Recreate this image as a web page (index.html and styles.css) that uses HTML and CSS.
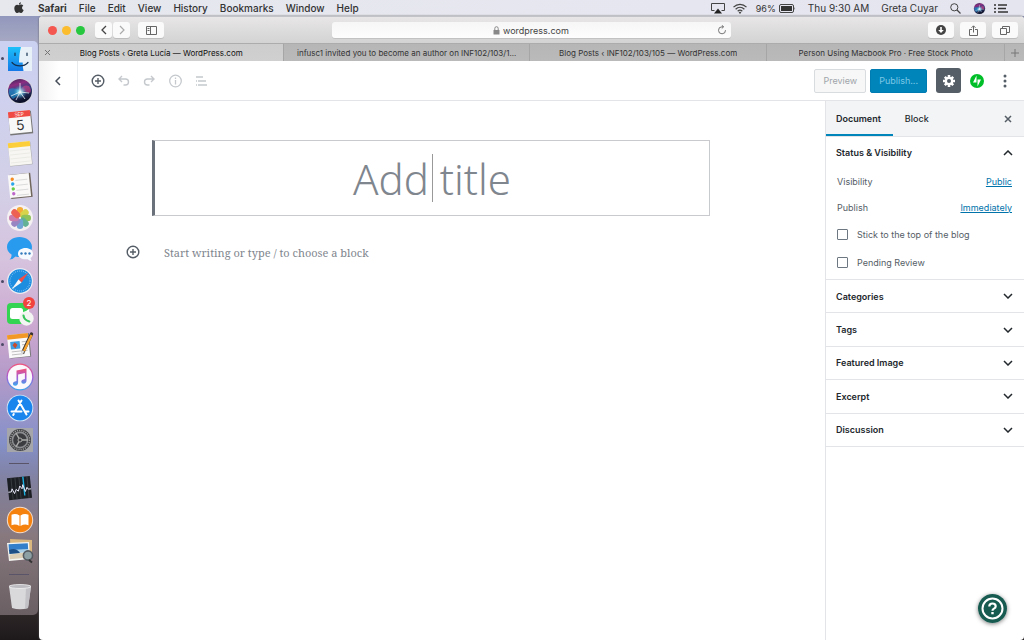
FILE: index.html
```
<!DOCTYPE html>
<html lang="en">

<head>
    <meta charset="utf-8">
    <title>Blog Posts ‹ Greta Lucía — WordPress.com</title>
    <link rel="stylesheet" href="styles.css">
</head>

<body>
    <header class="menubar">
        <nav class="menus" aria-label="Menu bar">
            <button class="apple" aria-label="Apple menu">
                <svg width="10" height="12" viewBox="0 0 10 12"><path fill="#333" d="M6.9.2c.1 1.300-.9 2.400-2 2.400C4.800 1.500 5.800.4 6.900.2zM5 3.200c.5 0 1.200-.6 2.200-.6.8 0 1.600.4 2.100 1.100-1.900 1.100-1.500 3.700.4 4.400-.5 1.500-1.500 3-2.500 3-.8 0-1.100-.5-2.100-.5s-1.300.5-2.100.5C1.700 11.100.3 8.600.3 6.300c0-2.300 1.400-3.600 2.800-3.600.8 0 1.400.5 1.900.5z"/></svg>
            </button>
            <button class="app-name">Safari</button>
            <button>File</button>
            <button>Edit</button>
            <button>View</button>
            <button>History</button>
            <button>Bookmarks</button>
            <button>Window</button>
            <button>Help</button>
        </nav>
        <div class="status">
            <svg width="14" height="12" viewBox="0 0 14 12"><path fill="none" stroke="#444" d="M3.500 8.500h-3v-7h13v7h-3"/><path fill="#222" d="M7 6.500l4 5H3z"/></svg>
            <svg width="14" height="11" viewBox="0 0 14 11" fill="none" stroke="#444" stroke-width="1.200"><path d="M.5 4.200c3.800-3.800 9.200-3.800 13 0M2.600 6.200c2.600-2.500 6.200-2.500 8.800 0M4.700 8.200c1.400-1.300 3.200-1.300 4.600 0"/><path fill="#444" stroke="none" d="M7 8.600l1.300 1L7 11 5.700 9.600z"/></svg>
            <span class="battery">96%
                <svg width="17" height="9" viewBox="0 0 17 9"><rect x=".5" y=".5" width="14" height="8" rx="1.500" fill="none" stroke="#444"/><rect x="2" y="2" width="11" height="5" fill="#333"/><path fill="#444" d="M15.500 3q1.300 1.500 0 3z"/></svg>
            </span>
            <span>Thu 9:30 AM</span>
            <span>Greta Cuyar</span>
            <svg width="11" height="11" viewBox="0 0 11 11" fill="none" stroke="#444"><circle cx="4.300" cy="4.300" r="3.600"/><path d="M7 7l3.500 3.500" stroke-width="1.300"/></svg>
            <span class="extras">
                <svg width="13" height="13" viewBox="0 0 28 28"><use href="#siri"/></svg>
                <svg width="14" height="9" viewBox="0 0 14 9" fill="none" stroke="#333" stroke-width="1.300"><path d="M0 1h2M4 1h9M0 4.500h2M4 4.500h8M0 8h2M4 8h10"/></svg>
            </span>
        </div>
    </header>

    <div class="desktop">
        <nav class="dock" aria-label="Dock">
            <a href="#" class="running" aria-label="Finder">
                <svg viewBox="0 0 28 28"><defs><linearGradient id="finder" x2="0" y2="1"><stop stop-color="#1cc0fa"/><stop offset="1" stop-color="#1478e6"/></linearGradient></defs><path fill="url(#finder)" d="M2 2h24v24H2z"/><path fill="#e9f1f8" d="M15 2h11v24h-8.500q-.8-3-.8-8.500H13Q13.200 8 15 2z"/><path fill="none" stroke="#15314f" stroke-width="1.200" stroke-linecap="round" d="M9 8v2.500M21 8v2.500M6 17.500c4 4.500 12 4.500 16 0"/></svg>
            </a>
            <a href="#" aria-label="Siri">
                <svg viewBox="0 0 28 28">
                    <defs>
                        <linearGradient id="siri-fill" x2=".3" y2="1"><stop stop-color="#2b2752"/><stop offset=".3" stop-color="#8c2c80"/><stop offset=".55" stop-color="#34407f"/><stop offset="1" stop-color="#0c1129"/></linearGradient>
                        <radialGradient id="siri-glow"><stop stop-color="#fff"/><stop offset=".35" stop-color="#8fe5f5" stop-opacity=".7"/><stop offset="1" stop-color="#258fc8" stop-opacity="0"/></radialGradient>
                    </defs>
                    <g id="siri"><circle cx="14" cy="14" r="13" fill="#d8d8e2"/><circle cx="14" cy="14" r="12" fill="url(#siri-fill)"/><path fill="#1b97d4" opacity=".6" d="M3 12q6-2 11 2-3 6-7 8-5-4-4-10z"/><path fill="#df3c85" opacity=".6" d="M14 14q3-7 9-5 3 4 1 7-5-2-10-2z"/><circle cx="14" cy="15" r="7" fill="url(#siri-glow)"/><path stroke="#fff" stroke-width=".9" opacity=".8" d="M14 15L5 19M14 15l9 1M14 15V6M14 15l5 7M14 15l-4 8"/></g>
                </svg>
            </a>
            <a href="#" aria-label="Calendar">
                <svg viewBox="0 0 28 28"><g transform="rotate(-6 14 14)"><path fill="#777" d="M3 4h23v22.500H3z"/><path fill="#f8f8f8" d="M3 3h22v22H3z"/><path fill="#ef4a43" d="M3 3h22v6H3z"/><text x="14" y="8" class="cal-month">SEP</text><text x="14" y="22" class="cal-day">5</text></g></svg>
            </a>
            <a href="#" aria-label="Notes">
                <svg viewBox="0 0 28 28"><g transform="rotate(-6 14 14)"><path fill="#aaa" d="M3 3h22.500v22.500H3z"/><path fill="#f7f6f2" d="M3 2h22v23H3z"/><path fill="#fbce3a" d="M3 2h22v5H3z"/><path stroke="#e4e3de" stroke-width=".6" d="M4 10h20M4 14h20M4 18h20M4 22h20"/></g></svg>
            </a>
            <a href="#" aria-label="Reminders">
                <svg viewBox="0 0 28 28"><g transform="rotate(-6 14 14)"><path fill="#70665c" d="M4 2h21.500v24H4z"/><path fill="#faf9f8" d="M3 2h21v23H3z"/><path stroke="#c8c8c8" stroke-width=".6" d="M10 8h12M10 13h12M10 18h12M10 23h12"/><circle cx="7" cy="6.500" r="1.700" fill="#f58a22"/><circle cx="7" cy="11.300" r="1.700" fill="#2ba6e9"/><circle cx="7" cy="16.200" r="1.700" fill="#68cd48"/><circle cx="7" cy="21" r="1.700" fill="#bd68c9"/></g></svg>
            </a>
            <a href="#" aria-label="Photos">
                <svg viewBox="0 0 28 28"><circle cx="14" cy="14" r="13" fill="#f5f1f3"/><g opacity=".88"><rect x="10.800" y="3" width="6.400" height="10" rx="3.200" fill="#f8a21e"/><rect x="10.800" y="3" width="6.400" height="10" rx="3.200" fill="#d6cf35" transform="rotate(45 14 14)"/><rect x="10.800" y="3" width="6.400" height="10" rx="3.200" fill="#82bd45" transform="rotate(90 14 14)"/><rect x="10.800" y="3" width="6.400" height="10" rx="3.200" fill="#50aa89" transform="rotate(135 14 14)"/><rect x="10.800" y="3" width="6.400" height="10" rx="3.200" fill="#5e9bd0" transform="rotate(180 14 14)"/><rect x="10.800" y="3" width="6.400" height="10" rx="3.200" fill="#8c78bd" transform="rotate(225 14 14)"/><rect x="10.800" y="3" width="6.400" height="10" rx="3.200" fill="#c66fa5" transform="rotate(270 14 14)"/><rect x="10.800" y="3" width="6.400" height="10" rx="3.200" fill="#eb4e3d" transform="rotate(315 14 14)"/></g></svg>
            </a>
            <a href="#" aria-label="Messages">
                <svg viewBox="0 0 28 28"><path fill="#299bee" d="M13.500 2C20 2 26 6 26 12s-6 10-12.500 10q-2 0-4-.5Q7.500 24 3.500 24.500 6 22.500 5.500 19.500 1 17 1 12C1 6 7 2 13.500 2z"/><path fill="#f7fbff" d="M19.500 13c4 0 7.500 2.200 7.500 5.700 0 2-1 3.300-2.500 4.300q0 1.700 1.500 2.800-3 0-4.300-1.600c-5.500.8-9.700-1.700-9.700-5.500 0-3.500 3.500-5.700 7.500-5.700z"/><g fill="#347bbd"><circle cx="15.500" cy="18.500" r="1.200"/><circle cx="19.500" cy="18.500" r="1.200"/><circle cx="23.500" cy="18.500" r="1.200"/></g></svg>
            </a>
            <a href="#" class="running" aria-label="Safari">
                <svg viewBox="0 0 28 28"><circle cx="14" cy="14" r="13" fill="#ececf2"/><circle cx="14" cy="14" r="11.800" fill="#1d8de0"/><circle cx="14" cy="14" r="10" fill="none" stroke="#9dd1f7" stroke-width="1.200" stroke-dasharray=".6 1.400"/><path fill="#f04d46" d="M22.500 5.500L12.500 12.500l3 3z"/><path fill="#f8f8f8" d="M5.500 22.500l10-7-3-3z"/></svg>
            </a>
            <a href="#" aria-label="FaceTime, 2 notifications">
                <svg viewBox="0 0 28 28"><rect x="1" y="4" width="22" height="21" rx="4" fill="#35d352"/><rect x="4" y="9" width="13" height="11" rx="2.500" fill="#fff"/><path fill="#fff" d="M17 14l6-4v10l-6-3z"/><circle cx="20.500" cy="19.500" r="7.200" fill="#f3f5f3"/><path fill="none" stroke="#37c45a" stroke-width="2.200" stroke-linecap="round" d="M17.500 16.500q.5 4.500 5.800 6"/></svg>
                <span class="badge">2</span>
            </a>
            <a href="#" class="running" aria-label="Pages">
                <svg viewBox="0 0 28 28"><g transform="rotate(-6 14 14)"><path fill="#777" d="M3 3h21v23.500H3z"/><path fill="#fafafa" d="M2 3h21v23H2z"/><path fill="#f29827" d="M2 3h21v4.500H2z"/><path fill="#419ee1" d="M4.500 10H14v7.500H4.500z"/><path fill="#c84c2d" d="M9 11l2.500 2.500L9 17l-2.500-3.500z"/><path stroke="#aaa" stroke-width=".7" d="M16 11h5M16 14h5M5 20h16M5 23h13"/></g><path stroke="#3a3330" stroke-width="3.400" stroke-linecap="round" d="M25.500 3L17 21"/><path stroke="#f5a32d" stroke-width="2.400" d="M25.500 4L18 20"/><path fill="#ddd" d="M15.500 19l3 1.500-4 5z"/></svg>
            </a>
            <a href="#" aria-label="iTunes">
                <svg viewBox="0 0 28 28"><defs><linearGradient id="note" x2="0" y2="1"><stop stop-color="#f35378"/><stop offset=".5" stop-color="#a65bd6"/><stop offset="1" stop-color="#38a8ed"/></linearGradient></defs><circle cx="14" cy="14" r="13.500" fill="url(#note)"/><circle cx="14" cy="14" r="12.200" fill="#fbf9fb"/><path fill="url(#note)" d="M10.500 7.500L20.500 5.500v12q0 3-3 3.300-2.200 0-2.200-2 0-2.200 3.600-2.800V10l-6.800 1.400v8.100q0 3-3 3.300-2.200 0-2.200-2 0-2.200 3.600-2.800z"/></svg>
            </a>
            <a href="#" aria-label="App Store">
                <svg viewBox="0 0 28 28"><circle cx="14" cy="14" r="13.300" fill="#d8e9f8"/><circle cx="14" cy="14" r="12.400" fill="#1a86ed"/><g fill="none" stroke="#fff" stroke-width="2" stroke-linecap="round"><path d="M15.500 6.500L9 17.500M12.500 6.500l8 14M5.500 17.500h10M19.500 17.500h3M7.800 20l-.6 1"/></g></svg>
            </a>
            <a href="#" aria-label="System Preferences">
                <svg viewBox="0 0 28 28"><path fill="#a4a6aa" d="M1 2h26v24H1z"/><circle cx="14" cy="14" r="11" fill="#3b3c3f"/><circle cx="14" cy="14" r="9.600" fill="none" stroke="#999" stroke-width="1.500" stroke-dasharray="1.200 1"/><circle cx="14" cy="14" r="7.600" fill="none" stroke="#8c8d90" stroke-width="1.600"/><circle cx="14" cy="14" r="2" fill="none" stroke="#aaa"/><path stroke="#aaa" stroke-width="1.400" d="M16 14h6M13 15.700l-3 5.200M13 12.300L10 7"/></svg>
            </a>
            <hr>
            <a href="#" aria-label="Activity Monitor">
                <svg viewBox="0 0 28 28"><g transform="rotate(-6 14 14)"><path fill="#1b1e22" d="M2 3h23v22H2z"/><path stroke="#484e55" stroke-width=".6" d="M6 3v22M10 3v22M14 3v22M22 3v22"/><path stroke="#1bb0df" stroke-width="1.400" d="M18 3v19"/><path fill="none" stroke="#eef" stroke-width=".9" d="M2 17h3l1-3 2 5 2-4 2 2 2-5 2 3 1-4 2 7 2-4 1 2h3"/></g></svg>
            </a>
            <a href="#" aria-label="iBooks">
                <svg viewBox="0 0 28 28"><circle cx="14" cy="14" r="13.200" fill="#f2dccb"/><circle cx="14" cy="14" r="12.200" fill="#f5820f"/><path fill="#fff" d="M13.500 9.500Q9.500 7 5.500 8.800v10.400q4-1.700 8 .8zM14.500 9.500q4-2.500 8-.7v10.400q-4-1.700-8 .8z"/></svg>
            </a>
            <a href="#" aria-label="Preview">
                <svg viewBox="0 0 28 28"><path fill="#d9b77e" d="M4 2l22 1v18L5 22z"/><path fill="#f5f5f2" d="M1 6l22-1 1 17-21 2z"/><path fill="#347fc9" d="M2.500 7.200l19.300-1 .4 7-19.200 1z"/><path fill="#a9cfe6" d="M3 13l19-1 .3 3-19 2z"/><path fill="#dccfb5" d="M3.500 17.500l19-2.500.3 5.500-19 1.800z"/><path fill="#1e4f86" d="M3 13q7-3 11 3l-10.500 1z"/><circle cx="22" cy="18.500" r="4.600" fill="#8da0a4" stroke="#555b60" stroke-width="1.600"/><path stroke="#333" stroke-width="2" d="M23 23l3 2.500"/></svg>
            </a>
            <hr>
            <a href="#" aria-label="Trash">
                <svg viewBox="0 0 28 28"><path fill="#d9d9db" d="M3 3h22l-3 22q-8 2.500-16 0z"/><path fill="#c2c2c6" d="M20 4h5l-3 21-3 .8z"/><ellipse cx="14" cy="3.500" rx="11" ry="2" fill="#bbbbc0" stroke="#f1f1f3" stroke-width=".8"/></svg>
            </a>
        </nav>

        <main class="window">
            <div class="toolbar">
                <div class="tools">
                    <div class="lights">
                        <button class="close" aria-label="Close window"></button>
                        <button class="minimize" aria-label="Minimize window"></button>
                        <button class="zoom" aria-label="Zoom window"></button>
                    </div>
                    <div class="history">
                        <button class="tool" aria-label="Back"><svg width="6" height="10" viewBox="0 0 6 10"><path d="M5 1L1 5l4 4" fill="none" stroke="#444" stroke-width="1.300"/></svg></button>
                        <button class="tool" aria-label="Forward"><svg width="6" height="10" viewBox="0 0 6 10"><path d="M1 1l4 4-4 4" fill="none" stroke="#aaa" stroke-width="1.200"/></svg></button>
                    </div>
                    <button class="tool wide" aria-label="Show sidebar"><svg width="11" height="9" viewBox="0 0 11 9" fill="none" stroke="#666"><path d="M.5.500h10v8H.5zM4.500.500v8M1.500 2.500h2M1.500 4.500h2"/></svg></button>
                </div>
                <div class="address">
                    <svg width="7" height="9" viewBox="0 0 7 9"><path fill="#888" d="M.5 4h6v4.500h-6z"/><path fill="none" stroke="#888" d="M1.800 4V2.500q0-1.800 1.700-1.800t1.700 1.800V4"/></svg>
                    <input type="text" value="wordpress.com" aria-label="Address">
                    <button class="reload" aria-label="Reload"><svg width="10" height="10" viewBox="0 0 10 10" fill="none" stroke="#666" stroke-width=".9"><path d="M8.500 5.200A3.500 3.500 0 1 1 5 1.800h1.500M4.800.2l1.800 1.600-1.800 1.700"/></svg></button>
                </div>
                <div class="tools end">
                    <button class="tool wide" aria-label="Downloads"><svg width="10" height="10" viewBox="0 0 10 10"><circle cx="5" cy="5" r="5" fill="#444"/><path fill="#fff" d="M4.200 2h1.600v3h2L5 8 2.200 5h2z"/></svg></button>
                    <button class="tool wide" aria-label="Share"><svg width="9" height="11" viewBox="0 0 9 11" fill="none" stroke="#666"><path d="M3 4.500H.5v6h8v-6H6M4.500 7.500V1M2.500 2.800l2-2 2 2"/></svg></button>
                    <button class="tool wide" aria-label="Show all tabs"><svg width="10" height="9" viewBox="0 0 10 9" fill="none" stroke="#666"><path d="M.5 2.500h6v6h-6zM2.500 2.500v-2h7v6h-3"/></svg></button>
                </div>
            </div>

            <nav class="tabs" aria-label="Tabs">
                <div class="tab active">
                    <button class="close-tab" aria-label="Close tab"><svg width="7" height="7" viewBox="0 0 7 7"><path d="M1 1l5 5M6 1L1 6" stroke="#777"/></svg></button>
                    <a href="#">Blog Posts ‹ Greta Lucía — WordPress.com</a>
                </div>
                <div class="tab"><a href="#">infusc1 invited you to become an author on INF102/103/1...</a></div>
                <div class="tab"><a href="#">Blog Posts ‹ INF102/103/105 — WordPress.com</a></div>
                <div class="tab"><a href="#">Person Using Macbook Pro · Free Stock Photo</a></div>
                <button class="new-tab" aria-label="New tab"><svg width="8" height="8" viewBox="0 0 8 8"><path d="M4 0v8M0 4h8" stroke="#777"/></svg></button>
            </nav>

            <div class="editor-header">
                <button class="back" aria-label="Back to posts"><svg width="7" height="10" viewBox="0 0 7 10"><path d="M5 1L1 5l4 4" fill="none" stroke="#444d58" stroke-width="1.500"/></svg></button>
                <div class="block-tools">
                    <button aria-label="Add block"><svg width="14" height="14" viewBox="0 0 14 14" fill="none" stroke="#555d66" stroke-width="1.400"><g id="add"><circle cx="7" cy="7" r="5.800"/><path d="M7 4v6M4 7h6"/></g></svg></button>
                    <button aria-label="Undo"><svg width="14" height="14" viewBox="0 0 14 14" fill="none" stroke="#c5c9cd" stroke-width="1.400"><path d="M2 5h6.500q3 0 3 3t-3 3H6.500M5 2L2 5l3 3"/></svg></button>
                    <button aria-label="Redo"><svg width="14" height="14" viewBox="0 0 14 14" fill="none" stroke="#c5c9cd" stroke-width="1.400"><path d="M11 5H4.500q-3 0-3 3t3 3H6.500M8 2l3 3-3 3"/></svg></button>
                    <button aria-label="Content structure"><svg width="14" height="14" viewBox="0 0 14 14" fill="none" stroke="#c5c9cd" stroke-width="1.300"><circle cx="6.500" cy="7" r="5.800"/><path d="M6.500 3.500v1.500M6.500 6v4.500"/></svg></button>
                    <button aria-label="Block navigation"><svg width="14" height="14" viewBox="0 0 14 14" stroke="#c5c9cd" stroke-width="1.300"><path d="M1 3h7M3 7h8M3 11h9M1 7h1M1 11h1"/></svg></button>
                </div>
                <div class="actions">
                    <button class="preview" disabled>Preview</button>
                    <button class="publish" disabled>Publish...</button>
                    <button class="settings" aria-label="Settings"><svg width="14" height="14" viewBox="0 0 14 14"><g stroke="#fff" stroke-width="2.600"><path d="M7 1v12M1 7h12M2.800 2.800l8.400 8.400M11.200 2.800l-8.400 8.400"/></g><circle cx="7" cy="7" r="4.300" fill="#fff"/><circle cx="7" cy="7" r="2" fill="#555d66"/></svg></button>
                    <button class="jetpack" aria-label="Jetpack"><svg width="14" height="14" viewBox="0 0 14 14"><circle cx="7" cy="7" r="7" fill="#00be28"/><path fill="#fff" d="M6.500 1.500v7H3zM7.500 12.500v-7H11z"/></svg></button>
                    <button class="more" aria-label="More tools"><svg width="4" height="14" viewBox="0 0 4 14" fill="#555d66"><circle cx="2" cy="2" r="1.500"/><circle cx="2" cy="7" r="1.500"/><circle cx="2" cy="12" r="1.500"/></svg></button>
                </div>
            </div>

            <div class="editor">
                <section class="canvas">
                    <div class="title">
                        <input type="text" placeholder="Add title" aria-label="Add title">
                    </div>
                    <div class="paragraph">
                        <button aria-label="Add block"><svg width="14" height="14" viewBox="0 0 14 14" fill="none" stroke="#555d66" stroke-width="1.400"><use href="#add"/></svg></button>
                        <input type="text" placeholder="Start writing or type / to choose a block" aria-label="Add block text">
                    </div>
                </section>

                <aside class="sidebar">
                    <div class="sidebar-tabs">
                        <button class="selected">Document</button>
                        <button>Block</button>
                        <button class="close-sidebar" aria-label="Close settings"><svg width="8" height="8" viewBox="0 0 8 8"><path d="M1 1l6 6M7 1L1 7" stroke="#555d66" stroke-width="1.500"/></svg></button>
                    </div>
                    <section class="status-panel">
                        <button class="panel-toggle">Status &amp; Visibility <svg width="10" height="6" viewBox="0 0 10 6"><path d="M1 5l4-4 4 4" fill="none" stroke="#23282d" stroke-width="1.500"/></svg></button>
                        <div class="row"><span>Visibility</span><a href="#">Public</a></div>
                        <div class="row"><span>Publish</span><a href="#">Immediately</a></div>
                        <label class="check"><input type="checkbox">Stick to the top of the blog</label>
                        <label class="check"><input type="checkbox">Pending Review</label>
                    </section>
                    <div class="panels">
                        <button class="panel-toggle">Categories <svg width="10" height="6" viewBox="0 0 10 6"><path id="down" d="M1 1l4 4 4-4" fill="none" stroke="#23282d" stroke-width="1.500"/></svg></button>
                        <button class="panel-toggle">Tags <svg width="10" height="6" viewBox="0 0 10 6"><use href="#down"/></svg></button>
                        <button class="panel-toggle">Featured Image <svg width="10" height="6" viewBox="0 0 10 6"><use href="#down"/></svg></button>
                        <button class="panel-toggle">Excerpt <svg width="10" height="6" viewBox="0 0 10 6"><use href="#down"/></svg></button>
                        <button class="panel-toggle">Discussion <svg width="10" height="6" viewBox="0 0 10 6"><use href="#down"/></svg></button>
                    </div>
                </aside>
            </div>

            <button class="help" aria-label="Help"><svg width="29" height="29" viewBox="0 0 29 29"><circle cx="14.500" cy="14.500" r="14.500" fill="#165a50"/><circle cx="14.500" cy="14.500" r="10" fill="none" stroke="#fff" stroke-width="2"/><path fill="none" stroke="#fff" stroke-width="2.200" d="M11.300 12.500q0-3 3.200-3t3.200 2.700q0 1.500-1.700 2.400-1.500.8-1.500 2.200"/><path fill="#fff" d="M13.300 18h2.400v2.200h-2.400z"/></svg></button>
        </main>
    </div>
</body>

</html>
```
FILE: styles.css
```
* {
    box-sizing: border-box;
}

body {
    margin: 0;
    height: 100vh;
    display: flex;
    flex-direction: column;
    overflow: hidden;
    font-family: Inter, "Liberation Sans", sans-serif;
    font-size: 9px;
    color: #23282d;
    background: #2b2629;
}

button,
input {
    margin: 0;
    padding: 0;
    border: 0;
    background: none;
    font: inherit;
    color: inherit;
    outline: none;
}

button {
    display: flex;
    align-items: center;
    justify-content: center;
}

svg {
    display: block;
    flex: none;
}

/* menu bar */
.menubar {
    height: 16px;
    flex: none;
    display: flex;
    align-items: center;
    justify-content: space-between;
    padding: 0 16px 0 14px;
    background: linear-gradient(90deg, #e6e8ee, #e5e5f0);
    font-size: 10px;
    font-weight: 500;
    color: #333;
}

.menus,
.status {
    display: flex;
    align-items: center;
    gap: 12px;
}

.apple {
    margin-right: 2px;
}

.app-name {
    font-weight: 700;
}

.status {
    font-weight: 400;
}

.status > svg:first-child {
    margin-right: -4px;
}

.status > svg:nth-child(2) {
    margin-right: -3px;
}

.battery {
    display: flex;
    align-items: center;
    gap: 3px;
    font-size: 9px;
}

.extras {
    display: flex;
    align-items: center;
    gap: 8px;
}

/* desktop and dock */
.desktop {
    flex: 1;
    min-height: 0;
    display: flex;
    background: linear-gradient(#9298bd, #a6a8c2 25px, #6e6870 560px, #2c2526 600px, #1d191b);
}

.dock {
    width: 38px;
    flex: none;
    margin: 25px 1px 25px 0;
    padding: 2px 0;
    display: grid;
    grid-template-rows: repeat(13, minmax(0, 1fr)) 16px repeat(3, minmax(0, 1fr)) 14px minmax(0, 1fr);
    border-radius: 0 5px 5px 0;
    background: linear-gradient(#cbd1f1, #d3d0e8 25%, #d6c3de 38%, #cba8d0 50%, #b59bc9 58%, #8490c8 70%, #81809d 77%, #88797f 86%, #6a5f63);
}

.dock a {
    position: relative;
    display: flex;
    align-items: center;
    justify-content: center;
    padding-left: 2px;
}

.dock svg {
    width: 28px;
    height: 28px;
}

.dock hr {
    width: 20px;
    margin: auto;
    border: 0;
    border-top: 1px solid #5a5468;
}

.running::before {
    content: "";
    position: absolute;
    left: 1px;
    width: 3px;
    height: 3px;
    border-radius: 50%;
    background: #4b4a66;
}

.badge {
    position: absolute;
    top: 0;
    right: 3px;
    width: 12px;
    height: 12px;
    border-radius: 50%;
    background: #f2423d;
    color: #fff;
    font-size: 8px;
    line-height: 12px;
    text-align: center;
}

.cal-month {
    font-size: 5px;
    fill: #fff;
    text-anchor: middle;
}

.cal-day {
    font-size: 14px;
    fill: #333;
    text-anchor: middle;
}

/* browser window */
.window {
    flex: 1;
    min-width: 0;
    display: flex;
    flex-direction: column;
    overflow: hidden;
    border-radius: 4px;
    background: #fff;
    box-shadow: 0 0 2px #555;
}

.toolbar {
    height: 27px;
    flex: none;
    display: grid;
    grid-template-columns: 1fr 41% 1fr;
    align-items: center;
    padding: 0 6px;
    border-top: 1px solid #c2c3c8;
    background: linear-gradient(#e8e6e7, #d3d3d3);
}

.tools {
    display: flex;
    align-items: center;
    gap: 8px;
}

.end {
    justify-content: flex-end;
    gap: 6px;
}

.lights {
    display: flex;
    gap: 5px;
    margin: 0 2px 0 3px;
}

.lights button {
    width: 9px;
    height: 9px;
    border-radius: 50%;
}

.close {
    background: #f4574f;
}

.minimize {
    background: #fbbc2e;
}

.zoom {
    background: #27c83f;
}

.history {
    display: flex;
    gap: 1px;
}

.tool {
    width: 17px;
    height: 16px;
    border-radius: 3px;
    background: #fafafa;
    box-shadow: 0 1px 0 #bdbdbd;
}

.wide {
    width: 26px;
}

.address {
    position: relative;
    display: flex;
    align-items: center;
    justify-content: center;
    gap: 2px;
    height: 16px;
    border-radius: 3px;
    background: linear-gradient(#f6f6f6, #fdfdfd);
    box-shadow: 0 1px 0 #c2c2c2;
}

.address input {
    width: 68px;
    padding-left: 1px;
    color: #444;
}

.reload {
    position: absolute;
    right: 4px;
}

.tabs {
    height: 18px;
    flex: none;
    display: grid;
    grid-template-columns: 31fr 31fr 30fr 30fr 19px;
    background: linear-gradient(#b6b6b6, #bababa);
    border-top: 1px solid #acacac;
    font-size: 8px;
    color: #333;
}

.tab {
    position: relative;
    display: flex;
    align-items: center;
    justify-content: center;
    min-width: 0;
    border-right: 1px solid #a6a6a6;
}

.tab a {
    color: inherit;
    text-decoration: none;
    white-space: nowrap;
    overflow: hidden;
}

.active {
    background: linear-gradient(#cdcdcd, #d0d0d0);
    color: #111;
}

.close-tab {
    position: absolute;
    left: 5px;
}

/* editor header */
.editor-header {
    height: 40px;
    flex: none;
    display: flex;
    align-items: center;
    border-bottom: 1px solid #e2e4e7;
}

.back {
    width: 39px;
    align-self: stretch;
    border-right: 1px solid #e8eaec;
    background: linear-gradient(90deg, #f2f2f2, #fff 20px);
}

.block-tools {
    display: flex;
    gap: 12px;
    padding-left: 13px;
}

.actions {
    display: flex;
    align-items: center;
    margin-left: auto;
    padding-right: 17px;
}

.preview,
.publish {
    height: 24px;
    padding: 0 8px;
    border: 1px solid #d9dcdf;
    border-radius: 2px;
    background: #f7f7f7;
    color: #a0a5aa;
}

.publish {
    margin: 0 9px 0 4px;
    border-color: #007cb2;
    background: #0085ba;
    color: #7cc8e6;
}

.settings {
    width: 25px;
    height: 25px;
    border-radius: 3px;
    background: #555d66;
}

.jetpack {
    margin: 0 19px 0 9px;
}

/* editor */
.editor {
    flex: 1;
    min-height: 0;
    display: flex;
}

.canvas {
    flex: 1;
    padding: 39px 115px 0 87px;
}

.title {
    position: relative;
    margin-left: 26px;
    border: 1px solid #c8cacd;
    border-left: 3px solid #6a717a;
}

.title input {
    display: block;
    width: 100%;
    height: 74px;
    font-family: "Noto Sans", "Open Sans", sans-serif;
    font-size: 42px;
    font-weight: 300;
    text-align: center;
}

/* text cursor in the middle of the empty title */
.title::after {
    content: "";
    position: absolute;
    top: 13px;
    bottom: 13px;
    left: 50%;
    width: 1px;
    background: #999;
}

.title input::placeholder,
.paragraph input::placeholder {
    color: #7f868e;
    opacity: 1;
}

.paragraph {
    display: flex;
    align-items: center;
    gap: 24px;
    margin-top: 26px;
}

.paragraph input {
    flex: 1;
    height: 20px;
    font-family: "Noto Serif", "DejaVu Serif Condensed", "DejaVu Serif", serif;
    font-size: 11px;
}

/* settings sidebar */
.sidebar {
    width: 199px;
    flex: none;
    border-left: 1px solid #e2e4e7;
}

.sidebar-tabs {
    height: 36px;
    display: flex;
    padding-right: 12px;
    border-bottom: 1px solid #e2e4e7;
    background: #f3f4f5;
    font-weight: 500;
}

.sidebar-tabs button {
    padding: 2px 12px 0;
    border-bottom: 2px solid transparent;
}

.sidebar-tabs .selected {
    padding-left: 10px;
    border-color: #0085ba;
    font-weight: 600;
}

.sidebar-tabs .close-sidebar {
    margin-left: auto;
    padding: 2px 0 0;
}

.panel-toggle {
    width: 100%;
    height: 31px;
    justify-content: space-between;
    padding: 0 11px 0 10px;
    font-weight: 600;
}

.status-panel {
    padding-bottom: 3px;
    border-bottom: 1px solid #e2e4e7;
}

.row {
    height: 26px;
    display: flex;
    align-items: center;
    justify-content: space-between;
    padding: 0 12px 0 11px;
    color: #555d66;
}

.row a {
    color: #0073aa;
}

.check {
    height: 28px;
    display: flex;
    align-items: center;
    gap: 9px;
    padding: 0 11px;
    color: #555d66;
}

.check input {
    appearance: none;
    width: 11px;
    height: 11px;
    border: 1px solid #6c7781;
    border-radius: 1px;
}

.panels {
    display: grid;
    grid-auto-rows: 1fr;
    min-height: 167px;
}

.panels .panel-toggle {
    height: auto;
    border-bottom: 1px solid #e2e4e7;
}

.help {
    position: fixed;
    right: 17px;
    bottom: 17px;
    border-radius: 50%;
    box-shadow: 0 1px 4px rgba(0, 0, 0, .5);
}
```
